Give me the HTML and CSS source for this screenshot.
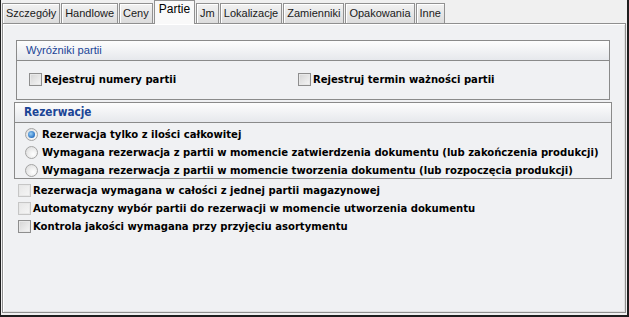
FILE: index.html
```html
<!DOCTYPE html>
<html lang="pl">
<head>
    <meta charset="UTF-8">
    <title>Partie</title>
    <link rel="stylesheet" href="styles.css">
</head>
<body>
    <div class="window">
        <div class="tabs">
            <div class="tab">Szczegóły</div>
            <div class="tab">Handlowe</div>
            <div class="tab">Ceny</div>
            <div class="tab active">Partie</div>
            <div class="tab">Jm</div>
            <div class="tab">Lokalizacje</div>
            <div class="tab">Zamienniki</div>
            <div class="tab">Opakowania</div>
            <div class="tab">Inne</div>
        </div>
        <div class="panel">
            <div class="group first">
                <div class="group-title">Wyróżniki partii</div>
                <div class="group-body cols">
                    <label class="check"><span class="box"></span>Rejestruj numery partii</label>
                    <label class="check"><span class="box"></span>Rejestruj termin ważności partii</label>
                </div>
            </div>

            <div class="group second">
                <div class="group-title bold">Rezerwacje</div>
                <div class="group-body rows">
                    <label class="radio"><span class="dot on"></span>Rezerwacja tylko z ilości całkowitej</label>
                    <label class="radio"><span class="dot"></span>Wymagana rezerwacja z partii w momencie zatwierdzenia dokumentu (lub zakończenia produkcji)</label>
                    <label class="radio"><span class="dot"></span>Wymagana rezerwacja z partii w momencie tworzenia dokumentu (lub rozpoczęcia produkcji)</label>
                </div>
            </div>

            <div class="options">
                <label class="check"><span class="box disabled"></span>Rezerwacja wymagana w całości z jednej partii magazynowej</label>
                <label class="check"><span class="box disabled"></span>Automatyczny wybór partii do rezerwacji w momencie utworzenia dokumentu</label>
                <label class="check"><span class="box"></span>Kontrola jakości wymagana przy przyjęciu asortymentu</label>
            </div>
        </div>
    </div>
</body>
</html>
```

FILE: styles.css
```css
html, body {
    margin: 0;
    padding: 0;
}
body {
    width: 629px;
    height: 317px;
    background: #f0f0f0;
    font-family: "Liberation Sans", Arial, sans-serif;
    font-size: 11px;
    color: #000;
    overflow: hidden;
}
.window {
    box-sizing: border-box;
    width: 629px;
    height: 317px;
    border-left: 1px solid #1e1e1e;
    border-right: 2px solid #1e1e1e;
    border-bottom: 2px solid #1e1e1e;
    padding: 0 0 2px 1px;
    display: flex;
    flex-direction: column;
    background: #f0f0f0;
}
.tabs {
    display: flex;
    align-items: flex-end;
    height: 23px;
    padding-top: 1px;
    box-sizing: border-box;
    position: relative;
    z-index: 1;
}
.tab {
    height: 20px;
    box-sizing: border-box;
    padding: 0 3px;
    margin-right: 1px;
    border: 1px solid #919191;
    border-bottom: none;
    background: linear-gradient(#f2f2f2, #dcdcdc);
    box-shadow: inset 1px 1px 0 #fff;
    line-height: 19px;
    font-size: 11px;
    color: #1a1a1a;
}
.tab.active {
    height: 24px;
    margin-bottom: -1px;
    background: #f9f9f9;
    box-shadow: none;
    line-height: 17px;
    padding: 0 4px;
    font-size: 12px;
    color: #000;
}
.panel {
    flex: 1;
    margin-right: 1px;
    border: 1px solid #8f8f8f;
    box-shadow: inset 1px 1px 0 #fff, inset -1px -1px 0 #e0e0e0;
    background: #f0f1f3;
    padding: 16px 15px 0 13px;
}
.group {
    border: 1px solid #8a8a8a;
    background: #f0f1f3;
}
.group.first {
    height: 60px;
    box-sizing: border-box;
}
.group.second {
    margin: 2px -2px 0 -2px;
    height: 77px;
    box-sizing: border-box;
}
.group-title {
    height: 19px;
    line-height: 19px;
    padding-left: 9px;
    border-bottom: 1px solid #8a8a8a;
    background: linear-gradient(#fdfdfd, #e6e8ec);
    color: #1b4596;
    font-size: 11.2px;
}
.group-title.bold {
    font-family: "DejaVu Sans Condensed", "DejaVu Sans", sans-serif;
    font-weight: bold;
    font-size: 11.7px;
}
.group-body.cols {
    display: flex;
    padding: 9px 0 0 12px;
}
.group-body.cols .check:first-child {
    width: 269px;
}
.group-body.rows {
    display: flex;
    flex-direction: column;
    padding: 2px 0 0 10px;
}
.check, .radio {
    display: flex;
    align-items: center;
    height: 18px;
    font-family: "DejaVu Sans Condensed", "DejaVu Sans", sans-serif;
    font-weight: bold;
    font-size: 11.2px;
    white-space: nowrap;
}
.box {
    width: 11px;
    height: 11px;
    border: 1px solid #8e8e8e;
    background: linear-gradient(135deg, #d4d4d4, #f6f6f6);
    box-shadow: inset 0 0 0 1px #e8e8e8;
    margin-right: 2px;
    flex: none;
}
.box.disabled {
    border-color: #c6c6c6;
    background: linear-gradient(135deg, #e6e6e6, #f6f6f6);
}
.dot {
    width: 11px;
    height: 11px;
    border-radius: 50%;
    border: 1px solid #a4a4a4;
    background: radial-gradient(circle at 65% 65%, #ffffff, #d8d8d8);
    margin-right: 4px;
    flex: none;
    position: relative;
}
.dot.on::after {
    content: "";
    position: absolute;
    left: 2px;
    top: 2px;
    width: 7px;
    height: 7px;
    border-radius: 50%;
    background: radial-gradient(circle at 40% 40%, #9ad0f6, #2a72c2 70%, #1b5aa8);
}
.options {
    padding: 2px 0 0 2px;
    display: flex;
    flex-direction: column;
}
```
